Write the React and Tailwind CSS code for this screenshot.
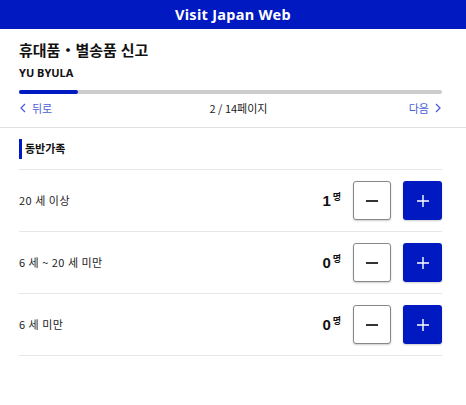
const rows = [
  { label: "20 세 이상", count: 1 },
  { label: "6 세 ~ 20 세 미만", count: 0 },
  { label: "6 세 미만", count: 0 },
];

function Chevron({ dir }) {
  return (
    <svg width="8" height="10" viewBox="0 0 8 10" fill="none" stroke="currentColor" strokeWidth="1.3">
      {dir === "left" ? <path d="M6 1 L2 5 L6 9" /> : <path d="M2 1 L6 5 L2 9" />}
    </svg>
  );
}

const kr = { fontFamily: '"Noto Sans CJK KR", sans-serif' };

export default function App() {
  return (
    <div
      className="w-[466px] h-[405px] bg-white text-[#111]"
      style={{ fontFamily: '"Noto Sans", "Noto Sans CJK KR", sans-serif' }}
    >
      <header className="h-[29px] bg-[#0019c0] flex items-center justify-center">
        <span className="text-white font-bold text-[14.5px] tracking-[0.3px]">Visit Japan Web</span>
      </header>

      <div className="pl-[19px] pr-[24px] pt-[10px]">
        <h1 className="text-[15px] font-bold leading-[22px]">휴대품・별송품 신고</h1>
        <p className="text-[11px] font-bold leading-[16px] mt-[4px]">YU BYULA</p>
        <div className="mt-[9px] h-[4px] rounded-full bg-[#cccccc]">
          <div className="h-full w-[59px] rounded-full bg-[#0019c0]" />
        </div>
        <div className="flex items-center justify-between h-[26px] mt-[1px] text-[11px]" style={kr}>
          <span className="flex items-center gap-[5px] text-[#4b5ed6]">
            <Chevron dir="left" /> 뒤로
          </span>
          <span className="text-[#222] ml-[16px]">2 / 14페이지</span>
          <span className="flex items-center gap-[5px] text-[#4b5ed6]">
            다음 <Chevron dir="right" />
          </span>
        </div>
      </div>
      <div className="h-px bg-[#e0e0e0] mt-[6px]" />

      <div className="pl-[19px] pr-[24px]">
        <div className="flex items-center h-[42px] border-b border-[#e6e6e6]">
          <div className="w-[3px] h-[20px] bg-[#0019c0] mr-[3px]" />
          <span className="text-[11px] font-bold" style={kr}>동반가족</span>
        </div>
        {rows.map((r) => (
          <div key={r.label} className="flex items-center h-[62px] border-b border-[#e6e6e6]">
            <span className="text-[11px] tracking-[0.5px] text-[#222] flex-1" style={kr}>{r.label}</span>
            <span className="flex items-start mr-[12px]" style={{ fontFamily: '"Liberation Sans", "Noto Sans CJK KR", sans-serif' }}>
              <span className="text-[15px] font-bold leading-[18px]">{r.count}</span>
              <span className="text-[9px] font-bold leading-[10px] ml-[2px]">명</span>
            </span>
            <button className="w-[38px] h-[39px] rounded-[3px] border border-[#888] bg-white shadow-[0_1px_2px_rgba(0,0,0,0.2)] flex items-center justify-center">
              <span className="block w-[12px] h-[2px] bg-[#333]" />
            </button>
            <button className="ml-[12px] w-[39px] h-[39px] rounded-[3px] bg-[#0019c0] shadow-[0_1px_2px_rgba(0,0,0,0.2)] flex items-center justify-center">
              <svg width="12" height="12" viewBox="0 0 12 12" stroke="white" strokeWidth="1.4">
                <path d="M6 0 V12 M0 6 H12" />
              </svg>
            </button>
          </div>
        ))}
      </div>
    </div>
  );
}
